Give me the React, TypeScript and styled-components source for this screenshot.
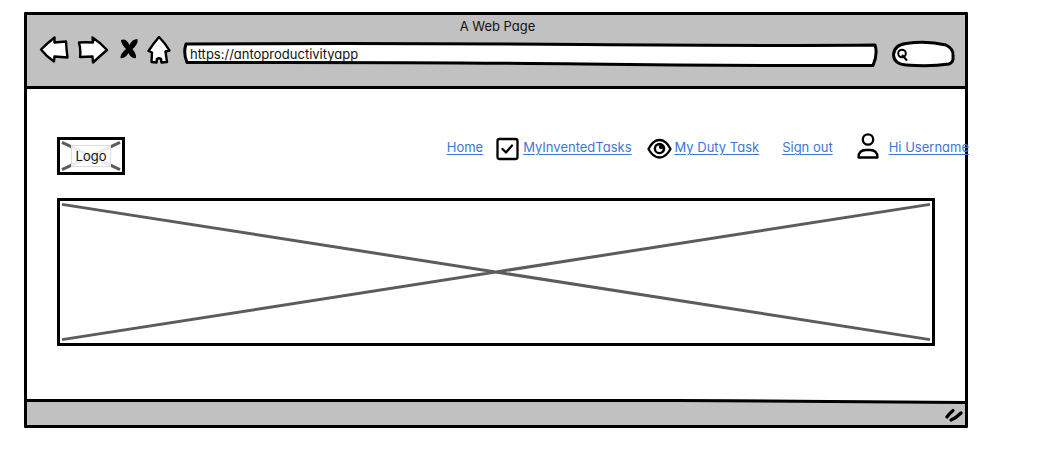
import React from "react";
import styled, { createGlobalStyle } from "styled-components";

const INK = "#000";
const CHROME = "#c1c1c1";
const LINK = "#3d76d6";
const CROSS = "#5c5c5c";

const GlobalStyle = createGlobalStyle`
  * { box-sizing: border-box; }
  body {
    margin: 0;
    background: #fff;
    color: #111;
    font-family: Inter, "Liberation Sans", sans-serif;
    font-size: 13px;
    line-height: 20px;
    font-feature-settings: "cv11";
  }
`;

const BrowserWindow = styled.div`
  margin: 12px 95px 24px 24px;
  border: 3px solid ${INK};
  border-radius: 1px;
  background: #fff;
`;

const Chrome = styled.header`
  background: ${CHROME};
  border-bottom: 3px solid ${INK};
  padding: 1px 9px 14px 12px;
`;

const Title = styled.div`
  text-align: center;
`;

const Toolbar = styled.div`
  display: flex;
  align-items: center;
  height: 36px;
`;

const Buttons = styled.div`
  display: flex;
  align-items: center;
  gap: 8px;
  padding-bottom: 8px;
  margin-right: 13px;
`;

const ToolButton = styled.button`
  display: flex;
  padding: 0;
  border: 0;
  background: none;
`;

const Field = styled.label<{ $fill?: boolean }>`
  position: relative;
  display: flex;
  height: 26px;
  ${(p) => (p.$fill ? "flex: 1; min-width: 0; margin-right: 15px;" : "width: 64px;")}
`;

const Outline = styled.svg`
  position: absolute;
  inset: 0;
  width: 100%;
  height: 100%;
  fill: #fff;
  stroke: ${INK};
  stroke-width: 3px;
  stroke-linejoin: round;
  overflow: visible;
`;

const Lens = styled.g`
  fill: none;
  stroke-width: 2px;
  stroke-linecap: round;
`;

const TextInput = styled.input<{ $indent: number }>`
  position: relative;
  flex: 1;
  min-width: 0;
  border: 0;
  outline: 0;
  padding: 0 8px 0 ${(p) => p.$indent}px;
  background: transparent;
  color: inherit;
  font: inherit;
  font-feature-settings: inherit;
`;

const Page = styled.main`
  padding: 48px 30px 53px;
`;

const TopRow = styled.div`
  display: flex;
  justify-content: space-between;
  align-items: flex-start;
  margin: 0 -34px 23px 0;
`;

const Placeholder = styled.div<{ $height: number }>`
  position: relative;
  display: flex;
  align-items: center;
  justify-content: center;
  height: ${(p) => p.$height}px;
  border: 3px solid ${INK};
`;

const LogoBox = styled(Placeholder)`
  width: 68px;
`;

const Diagonals = styled.svg`
  position: absolute;
  inset: 2px;
  width: calc(100% - 4px);
  height: calc(100% - 4px);
  stroke: ${CROSS};
  stroke-width: 3px;
  overflow: visible;
`;

const LogoText = styled.span`
  position: relative;
  padding: 0 4px;
  border: 1px solid #ddd;
  background: rgba(255, 255, 255, 0.88);
`;

const Nav = styled.nav`
  display: flex;
  align-items: center;
  height: 20px;
`;

const NavLink = styled.a<{ $gap: number }>`
  display: flex;
  align-items: center;
  margin-left: ${(p) => p.$gap}px;
  color: ${LINK};
  text-decoration: underline;
  text-underline-offset: 2px;
  white-space: nowrap;
`;

const LinkIcon = styled.svg<{ $gap: number }>`
  flex: none;
  margin-right: ${(p) => p.$gap}px;
  fill: none;
  stroke: ${INK};
  stroke-width: 2.3px;
  stroke-linecap: round;
  stroke-linejoin: round;
`;

const StatusBar = styled.footer`
  position: relative;
  display: flex;
  justify-content: flex-end;
  align-items: center;
  height: 26px;
  padding-right: 2px;
  background: ${CHROME};
`;

const StatusEdge = styled.svg`
  position: absolute;
  left: 0;
  top: 0;
  width: 100%;
  height: 5px;
`;

const Grip = styled.svg`
  margin-top: 6px;
  stroke: ${INK};
  stroke-width: 3.2px;
  stroke-linecap: round;
`;

const toolIcon = {
  fill: "#fff",
  stroke: INK,
  strokeWidth: 2.4,
  strokeLinejoin: "round" as const,
  "aria-hidden": true,
};

const Crossed = () => (
  <Diagonals viewBox="0 0 100 100" preserveAspectRatio="none" aria-hidden>
    <path d="M0 1 L100 99 M0 99 L100 1" vectorEffect="non-scaling-stroke" />
  </Diagonals>
);

export default function App() {
  return (
    <>
      <GlobalStyle />
      <BrowserWindow>
        <Chrome>
          <Title>A Web Page</Title>
          <Toolbar>
            <Buttons>
              <ToolButton aria-label="Back">
                <svg width="30" height="28" viewBox="0 0 30 28" {...toolIcon}>
                  <path d="M2 13.5 Q8 7.5 15.5 1.5 L15.5 6.5 L27 5.5 Q27.5 14 28.5 21.5 L15.5 20.5 L15 25.5 Q7 20 2 13.5 Z" />
                </svg>
              </ToolButton>
              <ToolButton aria-label="Forward">
                <svg width="32" height="28" viewBox="0 0 32 28" {...toolIcon}>
                  <path d="M2 6.5 Q8 6 16 6.5 L15.5 1.5 Q24 7 30 14 Q23 20 16 26.5 L15.5 20.5 L3 21 Q4 14 2 6.5 Z" />
                </svg>
              </ToolButton>
              <ToolButton aria-label="Stop">
                <svg width="22" height="28" viewBox="0 0 22 28" fill={INK} aria-hidden>
                  <path d="M4 4 Q9 2 12.5 9 Q15 3 20.5 3 Q21.5 8 15.5 13 Q20 19 19 22 Q14 23 11.5 17 Q8 23 3.5 22 Q3 18 9 13 Q4 8 4 4 Z" />
                </svg>
              </ToolButton>
              <ToolButton aria-label="Home">
                <svg width="24" height="28" viewBox="0 0 24 28" {...toolIcon}>
                  <path d="M12 1 Q18 7 22.5 14.5 L18.5 15.5 L20 26 L14.5 26.5 L14 23 Q12 21.5 10 23 L9.5 26.5 L4.5 26 L5 16.5 L1.5 15 Q6 8 12 1 Z" />
                </svg>
              </ToolButton>
            </Buttons>
            <Field $fill>
              <Outline viewBox="0 0 694 26" preserveAspectRatio="none" aria-hidden>
                <path
                  d="M2 3 Q200 2 400 3.5 T692 4 Q695 13 690 24.5 Q550 25 400 23 T3 21.5 Q-1 12 2 3 Z"
                  vectorEffect="non-scaling-stroke"
                />
              </Outline>
              <TextInput $indent={6} aria-label="Address" defaultValue="https://antoproductivityapp" />
            </Field>
            <Field>
              <Outline viewBox="0 0 64 26" aria-hidden>
                <path d="M14 24 Q2 23 1.5 14 Q2 4 14 2.5 Q35 -0.5 54 4 Q62 8 61 15 Q62 21 57 23 Q38 26 14 24 Z" />
                <Lens>
                  <circle cx="10" cy="12.5" r="3.8" />
                  <path d="M10.5 14.5 L14.5 19" />
                </Lens>
              </Outline>
              <TextInput $indent={20} aria-label="Search" />
            </Field>
          </Toolbar>
        </Chrome>

        <Page>
          <TopRow>
            <LogoBox $height={38}>
              <Crossed />
              <LogoText>Logo</LogoText>
            </LogoBox>
            <Nav>
              <NavLink href="#home" $gap={0}>Home</NavLink>
              <NavLink href="#invented" $gap={13}>
                <LinkIcon $gap={4} width="23" height="28" viewBox="0 0 23 28" aria-hidden>
                  <rect x="1.5" y="6" width="20" height="20" rx="2" />
                  <path d="M6.5 16 L10 19.5 L16 12.5" />
                </LinkIcon>
                MyInventedTasks
              </NavLink>
              <NavLink href="#duty" $gap={15}>
                <LinkIcon $gap={3} width="25" height="28" viewBox="0 0 25 28" aria-hidden>
                  <path d="M1.5 16 Q6 7 12.5 7 T23.5 16 Q19 24.5 12.5 24.5 T1.5 16 Z" />
                  <circle cx="12.5" cy="15.5" r="5.8" fill={INK} stroke="none" />
                  <path d="M12.5 12.5 A2 2 0 0 0 15.5 15.5 A3.2 3.2 0 1 1 12.5 12.5 Z" fill="#fff" stroke="none" />
                </LinkIcon>
                My Duty Task
              </NavLink>
              <NavLink href="#signout" $gap={23}>Sign out</NavLink>
              <NavLink href="#user" $gap={24}>
                <LinkIcon $gap={9} width="23" height="28" viewBox="0 0 23 28" aria-hidden>
                  <circle cx="11" cy="6.5" r="5.2" />
                  <path d="M1.5 24.5 Q1.5 17 9 17 H13 Q20.5 17 20.5 24.5 Z" />
                </LinkIcon>
                Hi Username
              </NavLink>
            </Nav>
          </TopRow>
          <Placeholder $height={148}>
            <Crossed />
          </Placeholder>
        </Page>

        <StatusBar>
          <StatusEdge viewBox="0 0 938 5" preserveAspectRatio="none" aria-hidden>
            <path d="M0 0 H938 V3 L700 0 Z" fill="#fff" />
            <path d="M0 0 H650 L938 2 V5 L650 3 H0 Z" fill={INK} />
          </StatusEdge>
          <Grip width="18" height="14" viewBox="0 0 18 14" fill="none" aria-hidden>
            <path d="M2 9 Q4 6 8 2.5 M6 12 Q11 10 16 5" />
          </Grip>
        </StatusBar>
      </BrowserWindow>
    </>
  );
}
